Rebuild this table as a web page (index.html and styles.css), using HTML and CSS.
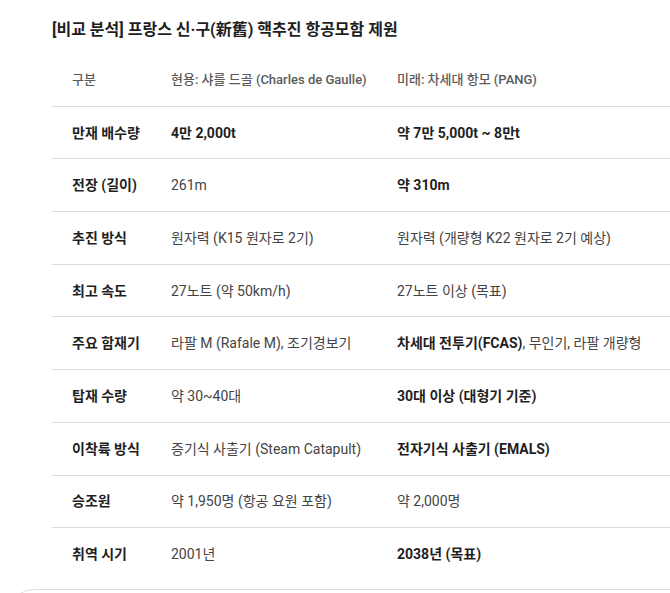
FILE: index.html
```html
<!DOCTYPE html>
<html lang="ko">
<head>
<meta charset="utf-8">
<link rel="stylesheet" href="styles.css">
</head>
<body>
<div class="page">
  <h2 class="title">[비교 분석] 프랑스 신·구(新舊) 핵추진 항공모함 제원</h2>
  <div class="table-wrap">
    <table class="spec">
      <colgroup>
        <col class="c1"><col class="c2"><col class="c3">
      </colgroup>
      <thead>
        <tr><th>구분</th><th>현용: 샤를 드골 (Charles de Gaulle)</th><th>미래: 차세대 항모 (PANG)</th></tr>
      </thead>
      <tbody>
        <tr><td class="lbl">만재 배수량</td><td><b>4만 2,000t</b></td><td><b>약 7만 5,000t ~ 8만t</b></td></tr>
        <tr><td class="lbl">전장 (길이)</td><td>261m</td><td><b>약 310m</b></td></tr>
        <tr><td class="lbl">추진 방식</td><td>원자력 (K15 원자로 2기)</td><td>원자력 (개량형 K22 원자로 2기 예상)</td></tr>
        <tr><td class="lbl">최고 속도</td><td>27노트 (약 50km/h)</td><td>27노트 이상 (목표)</td></tr>
        <tr><td class="lbl">주요 함재기</td><td>라팔 M (Rafale M), 조기경보기</td><td><b>차세대 전투기(FCAS)</b>, 무인기, 라팔 개량형</td></tr>
        <tr><td class="lbl">탑재 수량</td><td>약 30~40대</td><td><b>30대 이상 (대형기 기준)</b></td></tr>
        <tr><td class="lbl">이착륙 방식</td><td>증기식 사출기 (Steam Catapult)</td><td><b>전자기식 사출기 (EMALS)</b></td></tr>
        <tr><td class="lbl">승조원</td><td>약 1,950명 (항공 요원 포함)</td><td>약 2,000명</td></tr>
        <tr class="last"><td class="lbl">취역 시기</td><td>2001년</td><td><b>2038년 (목표)</b></td></tr>
      </tbody>
    </table>
  </div>
  <div class="composer"></div>
</div>
</body>
</html>
```

FILE: styles.css
```css
html, body {
  margin: 0;
  padding: 0;
  background: #ffffff;
  overflow: hidden;
}
.page {
  font-family: Roboto, "Noto Sans CJK KR", sans-serif;
  color: #1f1f1f;
  padding-top: 19px;
}
.title {
  margin: 0 0 13px 52px;
  font-size: 16px;
  line-height: 22px;
  font-weight: 700;
  color: #1f1f1f;
}
.table-wrap {
  margin-left: 52px;
  overflow: hidden;
}
.spec {
  border-collapse: collapse;
  width: 680px;
  table-layout: fixed;
}
.c1 { width: 99px; }
.c2 { width: 226px; }
.c3 { width: 355px; }
.spec th, .spec td {
  text-align: left;
  padding: 15.85px 0 15.85px 20px;
  line-height: 20px;
  white-space: nowrap;
  border-bottom: 1px solid #dcdcdc;
}
.spec th {
  font-size: 13px;
  font-weight: 500;
  color: #5b5b5b;
}
.spec td {
  font-size: 14px;
  color: #444444;
}
.spec td b {
  font-weight: 700;
  color: #1f1f1f;
}
.spec td.lbl {
  font-weight: 700;
  color: #1f1f1f;
}
.spec tr.last td {
  border-bottom: none;
}
.composer {
  margin: 9px 0 0 8px;
  width: 700px;
  height: 60px;
  border: 1px solid #dedede;
  border-radius: 26px;
}
```
